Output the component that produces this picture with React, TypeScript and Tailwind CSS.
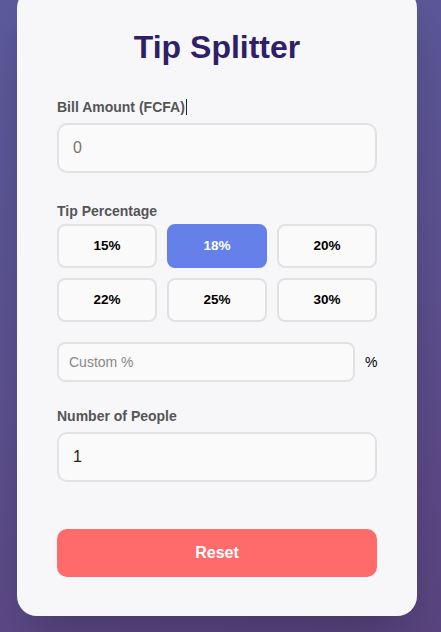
import { useState } from "react";

const TIPS = [15, 18, 20, 22, 25, 30];

export default function App() {
  const [tip, setTip] = useState(18);
  const [bill, setBill] = useState("");
  const [custom, setCustom] = useState("");
  const [people, setPeople] = useState("1");

  return (
    <div
      className="h-[632px] w-full overflow-hidden bg-[linear-gradient(160deg,#5b5b9d_0%,#5c5190_50%,#5a4480_100%)]"
      style={{ fontFamily: '"Liberation Sans", Arial, sans-serif' }}
    >
      <div className="ml-[17px] mt-[-12px] w-[400px] rounded-[20px] bg-[#f7f7fa] px-10 pt-10 pb-[39px] shadow-2xl">
        {/* Title */}
        <h1 className="text-center text-[32px] leading-[38px] font-bold text-[#2e1f66]">
          Tip Splitter
        </h1>

        {/* Bill amount */}
        <label className="mt-[33px] flex items-center text-[14px] leading-4 font-bold text-[#555]">
          Bill Amount (FCFA)
          <span className="ml-[1px] inline-block h-4 w-px bg-[#222]"></span>
        </label>
        <input
          type="number"
          placeholder="0"
          value={bill}
          onChange={(e) => setBill(e.target.value)}
          className="mt-2 block h-[50px] w-full rounded-[10px] border-2 border-[#e2e2e2] bg-[#fafafa] px-[14px] text-[16px] text-[#222] outline-none placeholder:text-[#777]"
        />

        {/* Tip percentage */}
        <div className="mt-[30px] text-[14px] leading-4 font-bold text-[#555]">Tip Percentage</div>
        <div className="mt-[5px] grid grid-cols-3 gap-x-[10px] gap-y-[10px]">
          {TIPS.map((t) => (
            <button
              key={t}
              onClick={() => setTip(t)}
              className={
                t === tip
                  ? "h-[44px] rounded-[8px] border-2 border-[#6680ea] bg-[#6680ea] text-[13.5px] font-bold text-white"
                  : "h-[44px] rounded-[8px] border-2 border-[#e2e2e2] bg-[#fafafa] text-[13.5px] font-bold text-black"
              }
            >
              {t}%
            </button>
          ))}
        </div>

        <div className="mt-5 flex items-center gap-[10px]">
          <input
            type="number"
            placeholder="Custom %"
            value={custom}
            onChange={(e) => setCustom(e.target.value)}
            className="block h-[40px] min-w-0 flex-1 rounded-[8px] border-2 border-[#e2e2e2] bg-[#fafafa] px-[10px] text-[14px] text-[#222] outline-none placeholder:text-[#888]"
          />
          <span className="w-[12px] text-[14px] text-black">%</span>
        </div>

        {/* Number of people */}
        <div className="mt-[26px] text-[14px] leading-4 font-bold text-[#555]">Number of People</div>
        <input
          type="number"
          value={people}
          onChange={(e) => setPeople(e.target.value)}
          className="mt-2 block h-[50px] w-full rounded-[10px] border-2 border-[#e2e2e2] bg-[#fafafa] px-[14px] text-[16px] text-[#222] outline-none"
        />

        <button
          onClick={() => {
            setBill("");
            setCustom("");
            setPeople("1");
            setTip(18);
          }}
          className="mt-[47px] block h-[48px] w-full rounded-[10px] bg-[#ff6b6b] text-[16px] font-bold text-white"
        >
          Reset
        </button>
      </div>
    </div>
  );
}
